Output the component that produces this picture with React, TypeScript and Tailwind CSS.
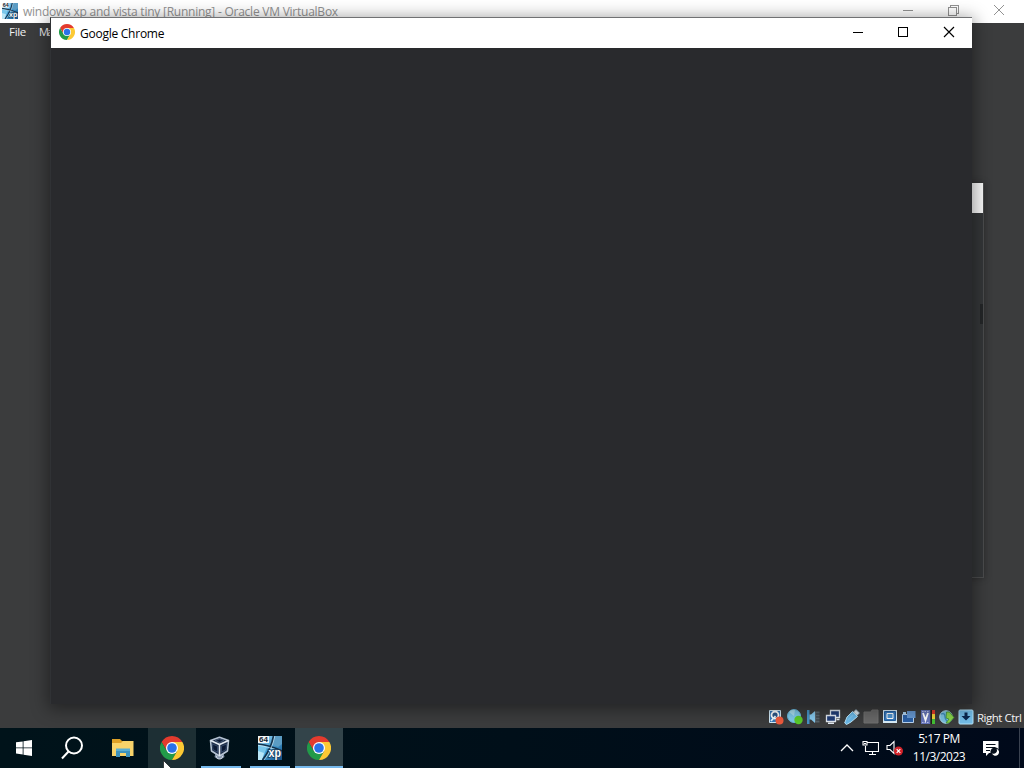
import React from 'react';

type IconProps = { className?: string };

const font = "font-['Open_Sans','Noto_Sans',sans-serif]";

const ChromeIcon: React.FC<IconProps> = ({ className }) => (
  <svg viewBox="0 0 48 48" className={className}>
    <path d="M24 0A24 24 0 0 1 44.8 12H24L13.6 30 3.2 12A24 24 0 0 1 24 0z" fill="#e33b2e" />
    <path d="M3.2 12A24 24 0 0 0 24 48l10.4-18H13.6z" fill="#229a49" />
    <path d="M44.8 12A24 24 0 0 1 24 48l10.4-18L24 12z" fill="#fcc934" />
    <circle cx="24" cy="24" r="12" fill="#fff" />
    <circle cx="24" cy="24" r="9.6" fill="#2a72e8" />
  </svg>
);

const MachineIcon: React.FC<IconProps> = ({ className }) => (
  <svg viewBox="0 0 24 24" className={className}>
    <defs>
      <linearGradient id="machine" x1="0" y1="0" x2="1" y2="1">
        <stop offset="0" stopColor="#b8e4f5" />
        <stop offset="0.5" stopColor="#3f9bd3" />
        <stop offset="1" stopColor="#164f83" />
      </linearGradient>
    </defs>
    <path d="M0 0h24v24H0z" fill="url(#machine)" />
    <path d="M15 0h9v8l-4 3-8-3z" fill="#5b9cc4" />
    <path d="M0 8l9 3-5 13H0z" fill="#79c6ea" />
    <path d="M0 15l6 2-2 7H0z" fill="#b9e6f7" />
    <path d="M15.500 0C14 9 10 17 4.500 24M0 8c8 1 16 3 24 7" stroke="#12304a" strokeWidth="1.7" fill="none" />
    <path d="M16.800 0C15 9 11 18 6 24M0 9.300c7 1 15 3 22 6" stroke="#e4f5fc" strokeWidth="0.6" fill="none" />
    <path d="M0 0h11v7H0z" fill="#f2f6f8" />
    <text x="1" y="6" fontSize="7" fontWeight="700" fill="#172430" fontFamily="Liberation Sans, sans-serif" textLength="9" lengthAdjust="spacingAndGlyphs">64</text>
    <text x="10.500" y="20.500" fontSize="12" fontWeight="700" fill="#fff" stroke="#173a59" strokeWidth="1.5" paintOrder="stroke" fontFamily="Liberation Sans, sans-serif" textLength="12.500" lengthAdjust="spacingAndGlyphs">xp</text>
  </svg>
);

const VirtualBoxIcon: React.FC<IconProps> = ({ className }) => (
  <svg viewBox="0 0 24 24" className={className}>
    <path d="M8 17h8l1 4-3 2h-4l-3-2z" fill="#8595aa" />
    <path d="M12 1.200 21 4.500l-1 10.500-8 5-8-5L3 4.500z" fill="#1c2c46" stroke="#b4c2d2" strokeWidth="1.600" strokeLinejoin="round" />
    <path d="m3 4.500 9 4 9-4M12 8.500V20" fill="none" stroke="#dfe7f0" strokeWidth="1.600" />
    <path d="m7.500 4.500 4.500 2 4.500-2L12 3z" fill="#0b1933" stroke="#4e6380" strokeWidth=".8" />
    <path d="m5 8 5 2.200v6L5.500 13.500zM19 8l-5 2.200v6l4.500-2.700z" fill="#0b1933" stroke="#40577a" strokeWidth=".7" />
    <path d="M9 20c0 2 1 3 3 3s3-1 3-3" fill="none" stroke="#d5dee8" />
  </svg>
);

const ExplorerIcon: React.FC<IconProps> = ({ className }) => (
  <svg viewBox="0 0 22 18" className={className}>
    <path d="M0 0h8l2 2h11v15H0z" fill="#dda027" />
    <path d="M0 4h9l2-2h10.500v15H0z" fill="#f8d36a" />
    <path d="M4 10h14v8h-4v-4H8v4H4z" fill="#3d92bd" />
    <path d="M4 9.500h14V12H4z" fill="#5aaed3" />
  </svg>
);

const StatusIcons = () => (
  <div className="flex gap-[3px]">
    {/* hard disk */}
    <svg viewBox="0 0 16 16" className="size-4">
      <path d="M1.500 1.500h11v12h-11z" fill="#3478b9" stroke="#d3ebf8" />
      <circle cx="7" cy="6" r="3.500" fill="#2b5687" stroke="#fff" strokeWidth="1.800" />
      <path d="m3 12 4.500-5" stroke="#e8f5fc" strokeWidth="1.800" />
      <circle cx="11.500" cy="11.500" r="4" fill="#ef5a3d" />
    </svg>
    {/* optical disk */}
    <svg viewBox="0 0 16 16" className="size-4">
      <circle cx="7" cy="7" r="6.500" fill="#7fc9e9" stroke="#68b8dc" />
      <path d="M7 7 2 3A6 6 0 0 1 8 1z" fill="#a9dff1" />
      <circle cx="11.500" cy="11" r="4.200" fill="#59cb2b" />
    </svg>
    {/* audio */}
    <svg viewBox="0 0 16 16" className="size-4">
      <path d="M1 1h2.500v14H1z" fill="#4593c8" />
      <path d="M3.500 5.500H5L9 2v12l-4-3.500H3.500z" fill="#86c9ee" />
      <path d="M9 2.500h4.500v11H9z" fill="#58646c" />
      <path d="M10 5h4M10 8h4M10 11h4" fill="none" stroke="#34393d" />
    </svg>
    {/* network */}
    <svg viewBox="0 0 16 16" className="size-4">
      <path d="M5.500 1.500h9v7h-9z" fill="#223e78" stroke="#e3eaf2" strokeWidth="1.300" />
      <path d="M1.500 6.500h9v6h-9z" fill="#223e78" stroke="#e3eaf2" strokeWidth="1.300" />
      <path d="M3 14.300h6M11.500 10.500h3" stroke="#e3eaf2" strokeWidth="1.400" />
    </svg>
    {/* usb */}
    <svg viewBox="0 0 16 16" className="size-4">
      <path d="m9.500 3 2.500-2.500 3.500 3.500L13 6.500z" fill="#dce8ef" stroke="#8daabd" strokeWidth=".7" />
      <path d="M8.500 2.500 13.500 7.500 7 13l-4.500 2.500L.7 14 3 8z" fill="#69b8e8" stroke="#b8e3f7" />
      <path d="m4 11 5-5" stroke="#7cc2ec" strokeWidth="1.300" />
    </svg>
    {/* shared folders */}
    <svg viewBox="0 0 16 16" className="size-4">
      <path d="M1 3h7l1-2h6v13H1z" fill="#686868" stroke="#707070" />
    </svg>
    {/* display */}
    <svg viewBox="0 0 16 16" className="size-4">
      <path d="M1 1h14v13H1z" fill="#d9edf9" />
      <path d="M2.500 2.500h11v9h-11z" fill="#3679bd" stroke="#2460a0" />
      <path d="M5 4.500h6v5H5z" fill="#4e94d0" stroke="#fff" />
    </svg>
    {/* recording */}
    <svg viewBox="0 0 16 16" className="size-4">
      <path d="M1.500 5.500h11v8h-11z" fill="#2a5fa5" stroke="#b9d3ee" />
      <path d="M6 2h8.500v7H6z" fill="#6798d2" />
      <path d="M2 3h3v2H2z" fill="#add4f2" />
    </svg>
    {/* processor */}
    <svg viewBox="0 0 16 16" className="size-4">
      <path d="M1 1h9v14H1z" fill="#6675b9" />
      <path d="M2 2.500h7M2 13.500h7" stroke="#b6bfea" strokeDasharray="1.500 1" />
      <path d="m3 4 2.500 7L8 4" fill="none" stroke="#fff" strokeWidth="1.800" />
      <path d="M11 1h4v14h-4z" fill="#211d14" />
      <path d="M12 1h3v4h-3z" fill="#e23c28" />
      <path d="M12 5h3v5h-3z" fill="#f1d338" />
      <path d="M12 10h3v5h-3z" fill="#43bf35" />
    </svg>
    {/* mouse integration */}
    <svg viewBox="0 0 16 16" className="size-4">
      <circle cx="7" cy="8" r="6.300" fill="#79bfdf" stroke="#add9e9" />
      <path d="M2 5c3-1 4 0 4 3s1 3 3 5" stroke="#3c89b6" strokeWidth="1.300" fill="none" />
      <path d="M7.500 3h3l4.500 5.500L10 14H7l3-4-3-1z" fill="#8bd54b" stroke="#3c8a35" strokeWidth=".8" />
    </svg>
    {/* keyboard capture */}
    <svg viewBox="0 0 16 16" className="size-4">
      <rect x="1" y="1" width="14" height="14" rx="1" fill="#74bde8" stroke="#b5e2f8" />
      <path d="M6.500 3.500h3V7h3L8 11.500 3.500 7h3z" fill="#0b2850" />
    </svg>
  </div>
);

const ChromeWindow = () => (
  <div className="absolute left-[50px] top-[17px] flex h-[687px] w-[922px] flex-col border-l border-t border-l-[#303235] border-t-[#707173] bg-[#292a2d] shadow-[0_3px_16px_2px_rgba(0,0,0,0.42)]">
    <div className="flex h-[30px] shrink-0 items-center bg-white pl-2 text-black">
      <ChromeIcon className="size-4 -translate-y-px" />
      <span className="ml-[5px] whitespace-nowrap pt-px text-[12px] leading-[18px] tracking-[-0.25px]">Google Chrome</span>
      <svg viewBox="0 0 138 30" className="ml-auto h-[30px] w-[138px]" fill="none" stroke="#000" shapeRendering="crispEdges">
        <path d="M19 14.500h10" />
        <path d="M64.500 9.500h9v9h-9z" />
        <path d="m110 9 10 10m0-10-10 10" shapeRendering="auto" strokeWidth="1.150" />
      </svg>
    </div>
  </div>
);

const MachineWindow = () => (
  <div className="relative flex h-[728px] flex-col bg-[#3b3c3d]">
    <div className="flex h-[23px] shrink-0 items-center bg-white text-[#929292]">
      <MachineIcon className="ml-0.5 size-4 -translate-y-px" />
      <span className="ml-[5px] whitespace-nowrap pt-px text-[12px] leading-[18px] tracking-[-0.24px]">windows xp and vista tiny [Running] - Oracle VM VirtualBox</span>
      <svg viewBox="0 0 138 23" className="ml-auto h-[23px] w-[138px]" fill="none" stroke="#929292">
        <path d="M17 10.500h10M62.500 7.500h8v8h-8zM64.500 7.500v-2h8v8h-2" shapeRendering="crispEdges" />
        <path d="m108 5 10 10m0-10-10 10" />
      </svg>
    </div>
    <div className="flex h-[18px] items-center pl-[9px] text-[11.5px] tracking-[-0.3px] text-[#f0f0f0]">
      <span className="w-[30px]">File</span>
      <span className="whitespace-nowrap text-[11px] tracking-[-1.8px]">Ma</span>
    </div>
    <div className="mt-auto flex h-[22px] items-center pl-[768px] text-[#f2f2f2]">
      <StatusIcons />
      <span className="ml-[3px] whitespace-nowrap pt-px text-[11.5px] tracking-[-0.5px]">Right Ctrl</span>
    </div>
    {/* guest window peeking out behind the browser */}
    <div className="absolute left-[700px] top-[183px] h-[395px] w-[284px] border-b border-r border-[#4b4c4d] bg-[#343638] shadow-[0_0_7px_rgba(0,0,0,0.3)]">
      <div className="h-[30px] bg-[#fafafa]" />
      <div className="ml-auto mt-[91px] h-5 w-[3px] bg-[#242628]" />
    </div>
    <ChromeWindow />
  </div>
);

const Taskbar = () => (
  <div className="relative flex h-10 bg-linear-to-r from-[#00131a] via-[#000f19] to-[#00091a] text-white">
    <div className="flex w-12 items-center justify-center">
      <svg viewBox="0 0 16 16" className="size-4" fill="#fff">
        <path d="m0 2.300 6.700-.9v6.100H0zM7.500 1.300 16 0v7.500H7.500zM0 8.300h6.700v6.100L0 13.500zM7.500 8.300H16V16l-8.500-1.300z" />
      </svg>
    </div>
    <div className="flex w-[50px] items-center justify-center">
      <svg viewBox="0 0 24 24" className="size-6 -translate-x-px" fill="none" stroke="#fff" strokeWidth="2">
        <circle cx="14" cy="9.500" r="8" />
        <path d="m8.500 15.500-6.500 7" />
      </svg>
    </div>
    <div className="flex w-[50px] items-center justify-center">
      <ExplorerIcon className="h-[18px] w-[22px]" />
    </div>
    <div className="flex w-12 items-center justify-center bg-[#1d2f34]">
      <ChromeIcon className="size-6" />
    </div>
    <div className="relative flex w-[49px] items-center justify-center">
      <VirtualBoxIcon className="size-6 -translate-x-[1.5px]" />
      <div className="absolute bottom-0 left-[5px] h-0.5 w-10 bg-[#76b9ed]" />
    </div>
    <div className="relative flex w-[50px] items-center justify-center">
      <MachineIcon className="size-6" />
      <div className="absolute bottom-0 left-[5px] h-0.5 w-10 bg-[#76b9ed]" />
    </div>
    <div className="relative flex w-12 items-center justify-center bg-[#33444a]">
      <ChromeIcon className="size-6" />
      <div className="absolute inset-x-0 bottom-0 h-0.5 bg-[#76b9ed]" />
    </div>
    <svg viewBox="0 0 10 16" className="absolute left-[163px] top-8 h-4 w-2.5">
      <path d="M.5.5V16L4 12.500 7 18l2-1-2.500-5H12z" fill="#fff" stroke="#16191b" strokeWidth=".7" />
    </svg>
    <div className="ml-auto flex w-[184px] items-center">
      <svg viewBox="0 0 14 8" className="h-2 w-3.5" fill="none" stroke="#fff" strokeWidth="1.3">
        <path d="m1 7 6-6 6 6" />
      </svg>
      <svg viewBox="0 0 17 16" className="ml-2 h-4 w-[17px]" fill="none" stroke="#fff" strokeWidth="1.100">
        <path d="M5 2.500h11.500v9H3.500V6M10.500 11.500v3M7 14.500h7M1 1.500h4v3.500H1zM2 3.500h2" />
      </svg>
      <svg viewBox="0 0 18 16" className="ml-[7px] h-4 w-[18px]">
        <path d="M1 5.500h3l4-4v12l-4-4H1z" fill="none" stroke="#fff" strokeWidth="1.100" />
        <circle cx="12.500" cy="11" r="4.500" fill="#d3232a" />
        <path d="m10.700 9.200 3.600 3.600m0-3.600-3.600 3.600" stroke="#fff" strokeWidth="1.200" />
      </svg>
      <div className="ml-[6px] w-[58px] whitespace-nowrap text-center text-[12px] leading-[18px]">
        <div className="tracking-[-0.45px]">5:17 PM</div>
        <div className="-mx-1 tracking-[-0.5px]">11/3/2023</div>
      </div>
      <svg viewBox="0 0 18 17" className="ml-[14px] h-[17px] w-[18px]">
        <path d="M1 1h15.500v12H7l-3 3v-3H1z" fill="#fff" />
        <path d="M4 4.500h9.500M4 7.500h9.500M4 10.500h4" stroke="#07101c" />
        <circle cx="13" cy="12" r="4.600" fill="#07101c" />
        <path d="M14.500 8.700a3.300 3.300 0 0 1-4.500 4.500 3.600 3.600 0 1 0 4.500-4.500z" fill="#fff" />
      </svg>
    </div>
    <div className="absolute right-1 top-0 h-10 w-px bg-[#3a4250]" />
  </div>
);

const App: React.FC = () => (
  <div className={`h-screen w-full overflow-hidden ${font}`}>
    <MachineWindow />
    <Taskbar />
  </div>
);

export default App;
